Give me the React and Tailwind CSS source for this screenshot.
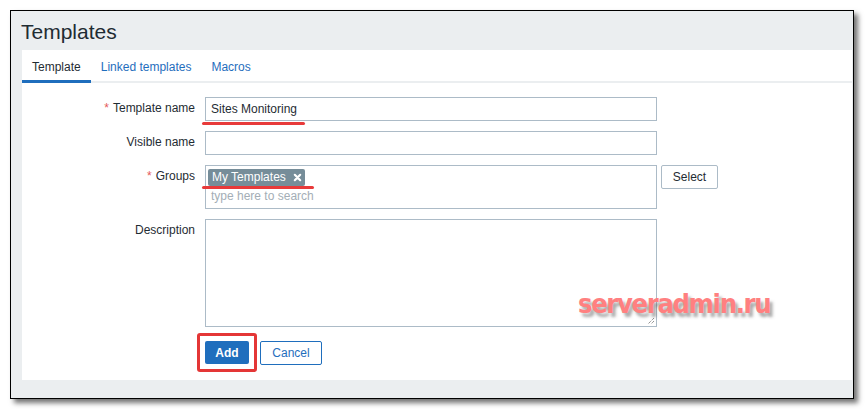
import React from 'react';

const font = { fontFamily: '"Liberation Sans", Arial, sans-serif' };

function Row({ label, required, children, className = '' }) {
    return (
        <div className={`flex items-start ${className}`}>
            <div className="w-[183px] pr-[10px] text-right text-[12px] text-[#1f2c33] leading-[23px]">
                {required && <span className="text-[#e45959] mr-[4px]">*</span>}
                {label}
            </div>
            {children}
        </div>
    );
}

export default function App() {
    return (
        <div className="w-[865px] h-[409px] bg-white pt-[10px] pl-[10px]" style={font}>
            <div className="w-[844px] h-[389px] border border-black bg-[#ebeef0] shadow-[4px_4px_5px_rgba(0,0,0,0.55)] flex flex-col">
                {/* header */}
                <div className="h-[39px] pl-[10px] flex items-center">
                    <h1 className="text-[21px] text-[#1f2c33] leading-none pt-[2px]">Templates</h1>
                </div>

                {/* panel */}
                <div className="ml-[11px] mr-[1px] h-[330px] bg-white flex flex-col">
                    {/* tabs */}
                    <div className="flex h-[33px] border-b-2 border-[#ebeef0] text-[12px]">
                        <div className="px-[10px] pt-[3px] flex items-center text-[#1f2c33] border-b-[3px] border-[#1f6ebd] -mb-[2px]">Template</div>
                        <div className="px-[10px] pt-[2px] flex items-center text-[#1f6ebd]">Linked templates</div>
                        <div className="px-[10px] pt-[2px] flex items-center text-[#1f6ebd]">Macros</div>
                    </div>

                    <div className="relative flex flex-col pt-[14px]">
                        <Row label="Template name" required>
                            <div className="relative">
                                <div className="w-[452px] h-[24px] border border-[#acbbc7] px-[5px] flex items-center text-[12px] text-[#1f2c33]">
                                    Sites Monitoring
                                </div>
                                <div className="absolute left-[-3px] top-[25px] w-[103px] h-[3px] bg-[#e83a3a] rounded-full" />
                            </div>
                        </Row>

                        <Row label="Visible name" className="mt-[10px]">
                            <div className="w-[452px] h-[24px] border border-[#acbbc7]" />
                        </Row>

                        <Row label="Groups" required className="mt-[10px]">
                            <div className="relative w-[452px] h-[44px] border border-[#acbbc7] px-[2px] pt-[2px] text-[12px]">
                                <div className="inline-flex items-center h-[17px] bg-[#768d99] text-white rounded-[2px] pl-[4px] pr-[3px]">
                                    My Templates
                                    <svg width="9" height="9" viewBox="0 0 10 10" className="ml-[7px]">
                                        <path d="M2 2 L8 8 M8 2 L2 8" stroke="white" strokeWidth="2.4" strokeLinecap="round" />
                                    </svg>
                                </div>
                                <div className="text-[#a4aeb6] pl-[3px] leading-[20px]">type here to search</div>
                                <div className="absolute left-[-4px] top-[20px] w-[112px] h-[3px] bg-[#e83a3a] rounded-full" />
                            </div>
                            <button className="ml-[4px] w-[57px] h-[24px] border border-[#acbbc7] rounded-[2px] bg-white text-[12px] text-[#1f2c33]">
                                Select
                            </button>
                        </Row>

                        <Row label="Description" className="mt-[10px]">
                            <div className="relative w-[452px] h-[108px] border border-[#acbbc7]">
                                <svg width="9" height="9" viewBox="0 0 9 9" className="absolute right-[1px] bottom-[1px]">
                                    <path d="M8 2 L2 8 M8 5 L5 8" stroke="#666" strokeWidth="1" strokeDasharray="1 1" />
                                </svg>
                            </div>
                        </Row>

                        <div className="flex items-center mt-[6px] pl-[175px]">
                            <div className="p-[5px] border-[3px] border-[#e43636] rounded-[3px]">
                                <button className="block w-[44px] h-[23px] bg-[#1f6ebd] text-white text-[12px] rounded-[2px] font-bold">Add</button>
                            </div>
                            <button className="ml-[3px] w-[62px] h-[24px] border border-[#1f6ebd] rounded-[2px] bg-white text-[#1f6ebd] text-[12px]">Cancel</button>
                        </div>

                        <div
                            className="absolute left-[556px] top-[201px] text-[27px] font-bold text-[#ff8080] tracking-[-1.3px]"
                            style={{ fontFamily: '"DejaVu Sans", sans-serif', fontStretch: 'condensed', textShadow: '3px 4px 3px rgba(90,90,90,0.5)' }}
                        >
                            serveradmin.ru
                        </div>
                    </div>
                </div>
            </div>
        </div>
    );
}
